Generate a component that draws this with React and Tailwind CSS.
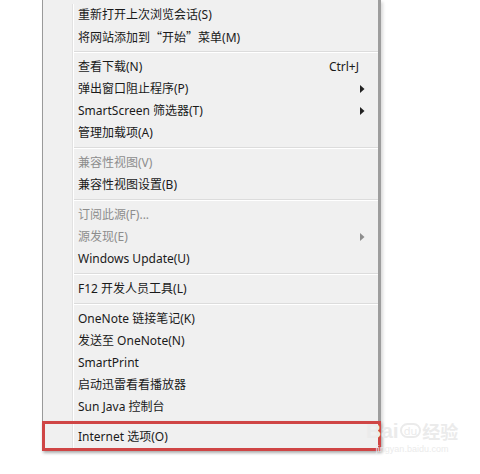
const Q = ({ children }) => (
  <span style={{ fontFamily: '"Noto Sans CJK SC", sans-serif' }}>{children}</span>
);

const groups = [
  [
    { label: "重新打开上次浏览会话(S)" },
    {
      label: (
        <>
          将网站添加到<Q>“</Q>开始<Q>”</Q>菜单(M)
        </>
      ),
    },
  ],
  [
    { label: "查看下载(N)", shortcut: "Ctrl+J" },
    { label: "弹出窗口阻止程序(P)", sub: true },
    { label: "SmartScreen 筛选器(T)", sub: true },
    { label: "管理加载项(A)" },
  ],
  [
    { label: "兼容性视图(V)", disabled: true },
    { label: "兼容性视图设置(B)" },
  ],
  [
    { label: "订阅此源(F)...", disabled: true },
    { label: "源发现(E)", disabled: true, sub: true },
    { label: "Windows Update(U)" },
  ],
  [{ label: "F12 开发人员工具(L)" }],
  [
    { label: "OneNote 链接笔记(K)" },
    { label: "发送至 OneNote(N)" },
    { label: "SmartPrint" },
    { label: "启动迅雷看看播放器" },
    { label: "Sun Java 控制台" },
  ],
];

const Row = ({ item }) => (
  <div
    className={`flex items-center h-[22px] pl-[35px] pr-[12px] ${
      item.disabled ? "text-[#8d8d8d]" : "text-[#1a1a1a]"
    }`}
  >
    <span className="flex-1">{item.label}</span>
    {item.shortcut && <span className="mr-[7px]">{item.shortcut}</span>}
    {item.sub && (
      <svg width="5" height="8" viewBox="0 0 5 8" className="mr-[1px]">
        <path d="M0 0L4.5 4L0 8Z" fill={item.disabled ? "#8d8d8d" : "#222"} />
      </svg>
    )}
  </div>
);

const Separator = () => (
  <div className="h-[8px] flex flex-col justify-center pl-[30px]">
    <div className="h-[1px] bg-[#dcdcdc]" />
    <div className="h-[1px] bg-white" />
  </div>
);

export default function App() {
  return (
    <div
      className="relative w-[480px] h-[474px] bg-white overflow-hidden"
      style={{ fontFamily: '"Noto Sans", "Noto Sans CJK SC", sans-serif' }}
    >
      <div className="ml-[42px] w-[339px] bg-[#f0f0f0] border-l border-[#9a9a9a] border-r-[3px] border-r-[#9d9d9d] border-b border-b-[#9a9a9a] text-[12px] pt-[4px] pb-[1px] shadow-[2px_2px_3px_rgba(0,0,0,0.15)]">
        <div className="relative">
          {/* gutter line */}
          <div className="absolute left-[29px] top-0 bottom-0 w-[2px] flex">
            <div className="w-[1px] bg-[#e2e2e2]" />
            <div className="w-[1px] bg-white" />
          </div>
          {groups.map((g, gi) => (
            <div key={gi}>
              {gi > 0 && <Separator />}
              {g.map((item, i) => (
                <Row key={i} item={item} />
              ))}
            </div>
          ))}
          <Separator />
          <Row item={{ label: "Internet 选项(O)" }} />
        </div>
      </div>
      {/* red highlight */}
      <div className="absolute left-[42px] top-[421px] w-[339px] h-[30px] border-[3px] border-[#cf4545] shadow-[1px_2px_3px_rgba(0,0,0,0.25)]" />
      {/* watermark */}
      <div className="absolute left-[366px] top-[420px] flex flex-col items-center text-[#ebebeb]">
        <div className="flex items-end leading-none">
          <span className="text-[21px] font-bold" style={{ fontFamily: '"Liberation Sans", sans-serif' }}>
            Bai
          </span>
          <span className="text-[11px] mx-[1px] mb-[3px] border-2 border-[#ebebeb] rounded-full px-[2px]">du</span>
          <span className="text-[18px] font-bold">经验</span>
        </div>
        <span className="text-[9px] mt-[2px]" style={{ fontFamily: '"Liberation Sans", sans-serif' }}>
          jingyan.baidu.com
        </span>
      </div>
    </div>
  );
}
